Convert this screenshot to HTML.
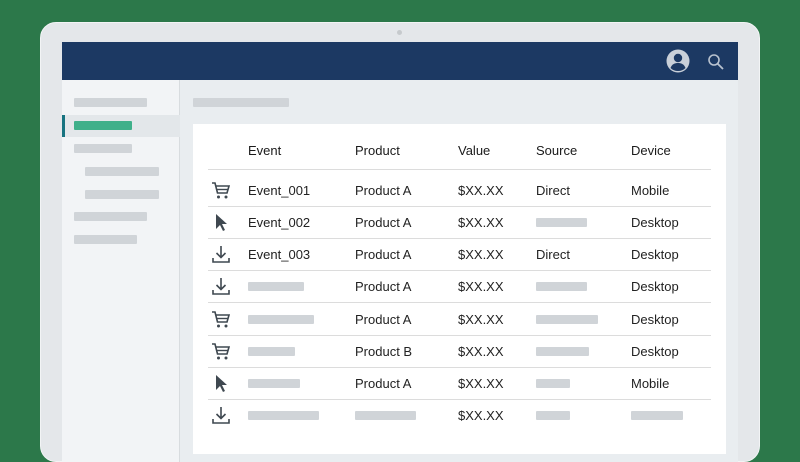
<!DOCTYPE html>
<html><head><style>
*{margin:0;padding:0;box-sizing:border-box}
body{width:800px;height:447px;overflow:hidden;background:#2c784a;font-family:"Liberation Sans",sans-serif;position:relative}
.bezel{position:absolute;left:40px;top:22px;width:720px;height:440px;background:#e4e7ea;border-radius:16px;border:1px solid #f2f4f5}
.cam{position:absolute;left:397px;top:30px;width:5px;height:5px;border-radius:50%;background:#c6cacd}
.screen{position:absolute;left:62px;top:42px;width:676px;height:420px;background:#e9edf0;overflow:hidden}
.hdr{position:absolute;left:0;top:0;width:676px;height:38px;background:#1c3963}
.side{position:absolute;left:0;top:38px;width:118px;height:400px;background:#f2f4f6;border-right:1px solid #d8dcdf}
.b{position:absolute;background:#d0d4d8;height:9px;border-radius:1px}
.t{position:absolute;font-size:13px;color:#222;white-space:nowrap}
.th{font-weight:normal;color:#1a1a1a}
.ln{position:absolute;left:146px;width:503px;height:1px;background:#dcdcdc}
svg.i{position:absolute}
</style></head><body>
<div class="bezel"></div><div class="cam"></div>
<div class="screen">
<div class="hdr">
<svg style="position:absolute;left:604px;top:7px" width="24" height="24" viewBox="0 0 24 24"><circle cx="12" cy="12" r="11.5" fill="#c9d0d9"/><circle cx="12" cy="9" r="4.2" fill="#1c3963"/><path d="M4.5 19c1.5-4 4.5-5 7.5-5s6 1 7.5 5c-2 2-4.5 3-7.5 3s-5.5-1-7.5-3z" fill="#1c3963"/></svg>
<svg style="position:absolute;left:645px;top:11px" width="18" height="18" viewBox="0 0 18 18"><circle cx="7" cy="7" r="5" fill="none" stroke="#b8c2cf" stroke-width="1.6"/><path d="M10.7 10.7L16 16" stroke="#b8c2cf" stroke-width="1.8"/></svg>
</div>
<div class="side">
<div class="b" style="left:12px;top:18px;width:73px"></div>
<div style="position:absolute;left:0;top:35px;width:118px;height:22px;background:#e3e7ea"></div>
<div style="position:absolute;left:0;top:35px;width:3px;height:22px;background:#177380"></div>
<div class="b" style="left:12px;top:41px;width:58px;background:#3fb08a"></div>
<div class="b" style="left:12px;top:64px;width:58px"></div>
<div class="b" style="left:23px;top:87px;width:74px"></div>
<div class="b" style="left:23px;top:110px;width:74px"></div>
<div class="b" style="left:12px;top:132px;width:73px"></div>
<div class="b" style="left:12px;top:155px;width:63px"></div>
</div>
<div class="b" style="left:131px;top:56px;width:96px"></div>
</div>
<div style="position:absolute;left:193px;top:124px;width:533px;height:330px;background:#fff"></div>
<div class="t th" style="left:248px;top:143px">Event</div>
<div class="t th" style="left:355px;top:143px">Product</div>
<div class="t th" style="left:458px;top:143px">Value</div>
<div class="t th" style="left:536px;top:143px">Source</div>
<div class="t th" style="left:631px;top:143px">Device</div>
<div class="ln" style="left:208px;top:169px"></div>
<div class="ln" style="left:208px;top:206px"></div>
<div class="ln" style="left:208px;top:238px"></div>
<div class="ln" style="left:208px;top:270px"></div>
<div class="ln" style="left:208px;top:302px"></div>
<div class="ln" style="left:208px;top:335px"></div>
<div class="ln" style="left:208px;top:367px"></div>
<div class="ln" style="left:208px;top:399px"></div>
<div class="t" style="left:248px;top:183px">Event_001</div><div class="t" style="left:355px;top:183px">Product A</div><div class="t" style="left:458px;top:183px">$XX.XX</div><div class="t" style="left:536px;top:183px">Direct</div><div class="t" style="left:631px;top:183px">Mobile</div>
<div class="t" style="left:248px;top:215px">Event_002</div><div class="t" style="left:355px;top:215px">Product A</div><div class="t" style="left:458px;top:215px">$XX.XX</div><div class="b" style="left:536px;top:218px;width:51px"></div><div class="t" style="left:631px;top:215px">Desktop</div>
<div class="t" style="left:248px;top:247px">Event_003</div><div class="t" style="left:355px;top:247px">Product A</div><div class="t" style="left:458px;top:247px">$XX.XX</div><div class="t" style="left:536px;top:247px">Direct</div><div class="t" style="left:631px;top:247px">Desktop</div>
<div class="b" style="left:248px;top:282px;width:56px"></div><div class="t" style="left:355px;top:279px">Product A</div><div class="t" style="left:458px;top:279px">$XX.XX</div><div class="b" style="left:536px;top:282px;width:51px"></div><div class="t" style="left:631px;top:279px">Desktop</div>
<div class="b" style="left:248px;top:315px;width:66px"></div><div class="t" style="left:355px;top:312px">Product A</div><div class="t" style="left:458px;top:312px">$XX.XX</div><div class="b" style="left:536px;top:315px;width:62px"></div><div class="t" style="left:631px;top:312px">Desktop</div>
<div class="b" style="left:248px;top:347px;width:47px"></div><div class="t" style="left:355px;top:344px">Product B</div><div class="t" style="left:458px;top:344px">$XX.XX</div><div class="b" style="left:536px;top:347px;width:53px"></div><div class="t" style="left:631px;top:344px">Desktop</div>
<div class="b" style="left:248px;top:379px;width:52px"></div><div class="t" style="left:355px;top:376px">Product A</div><div class="t" style="left:458px;top:376px">$XX.XX</div><div class="b" style="left:536px;top:379px;width:34px"></div><div class="t" style="left:631px;top:376px">Mobile</div>
<div class="b" style="left:248px;top:411px;width:71px"></div><div class="b" style="left:355px;top:411px;width:61px"></div><div class="t" style="left:458px;top:408px">$XX.XX</div><div class="b" style="left:536px;top:411px;width:34px"></div><div class="b" style="left:631px;top:411px;width:52px"></div>
<svg width="0" height="0" style="position:absolute"><defs>
<g id="cart"><path d="M1 2h3l2.5 10h9.5l2-7H5" fill="none" stroke="#3f4850" stroke-width="1.6"/><path d="M6 8.5h11" stroke="#3f4850" stroke-width="1.4"/><circle cx="7.5" cy="16" r="1.5" fill="#3f4850"/><circle cx="15" cy="16" r="1.5" fill="#3f4850"/></g>
<g id="ptr"><path d="M5 1v15l4-4 3 6 2-1-3-6h5z" fill="#3f4850"/></g>
<g id="dl"><path d="M10 1v11M5.5 8l4.5 4.5L14.5 8M2 13v4h16v-4" fill="none" stroke="#3f4850" stroke-width="1.6"/></g>
</defs></svg>
<svg class="i" style="left:211px;top:181px" width="20" height="19"><use href="#cart"/></svg>
<svg class="i" style="left:211px;top:213px" width="20" height="19"><use href="#ptr"/></svg>
<svg class="i" style="left:211px;top:245px" width="20" height="19"><use href="#dl"/></svg>
<svg class="i" style="left:211px;top:277px" width="20" height="19"><use href="#dl"/></svg>
<svg class="i" style="left:211px;top:310px" width="20" height="19"><use href="#cart"/></svg>
<svg class="i" style="left:211px;top:342px" width="20" height="19"><use href="#cart"/></svg>
<svg class="i" style="left:211px;top:374px" width="20" height="19"><use href="#ptr"/></svg>
<svg class="i" style="left:211px;top:406px" width="20" height="19"><use href="#dl"/></svg>
</body></html>
